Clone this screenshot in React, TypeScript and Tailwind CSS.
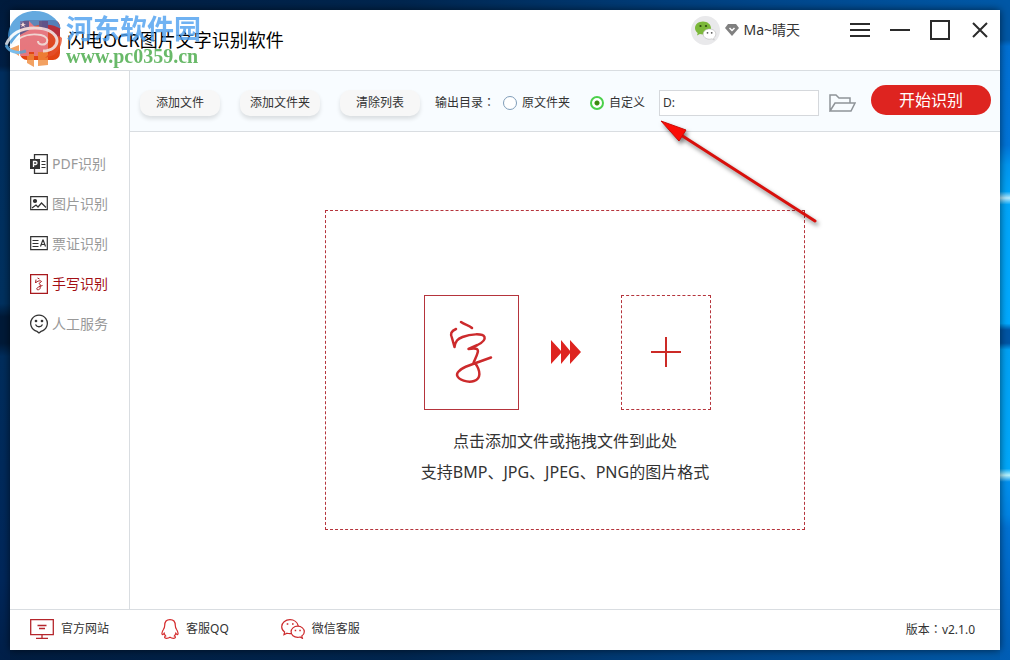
import { useState, type ReactNode } from 'react';

const tasks = [
	{ id: 'pdf', label: 'PDF识别', icon: <PdfIcon /> },
	{ id: 'image', label: '图片识别', icon: <ImageIcon /> },
	{ id: 'ticket', label: '票证识别', icon: <TicketIcon /> },
	{ id: 'handwriting', label: '手写识别', icon: <HandwritingIcon /> },
	{ id: 'manual', label: '人工服务', icon: <SmileIcon /> }
];

export default function App() {
	return (
		<div className="grid min-h-screen grid-cols-[10px_1fr_10px] bg-[linear-gradient(90deg,#001c3f_0%,#00264f_40%,#00468a_75%,#005aaa_100%)] font-['Noto_Sans','Noto_Sans_CJK_SC',sans-serif] text-xs text-[#333]">
			<div className="bg-[linear-gradient(180deg,#001b3c_0%,#001f45_10%,#002e5e_11%,#00315f_46%,#001a38_48%,#001a38_52%,#002d5c_54%,#00275a_88%,#001f48_100%)]" />
			<div className="relative my-[10px] flex flex-col bg-white shadow-[0_0_8px_rgba(0,0,0,0.6)]">
				<TitleBar />
				<div className="flex flex-1">
					<Sidebar />
					<div className="flex min-w-0 flex-1 flex-col">
						<Toolbar />
						<DropZone />
					</div>
				</div>
				<Footer />
				<Watermark />
				<PointerArrow />
			</div>
			<div className="bg-[linear-gradient(180deg,#0057a5_0%,#0057a5_6%,#0070d4_7%,#0074d8_22%,#0096f0_25%,#00a4f8_29%,#b8ecff_30%,#00a6fa_31%,#00aaff_49%,#0055a5_50%,#0055a5_52%,#00a2f5_53%,#00a8fa_71%,#b8f4ff_72%,#0090ee_73%,#0084e4_78%,#0072d4_80%,#0066c4_90%,#005db4_100%)]" />
		</div>
	);
}

function TitleBar() {
	return (
		<header className="flex h-[61px] items-center border-b border-[#d9dde1] pl-[10px]">
			<AppLogo />
			<h1 className="ml-[7px] text-lg leading-6 text-black">
				闪电OCR图片文字识别软件
			</h1>
			<div className="ml-auto flex h-10 items-center self-start">
				<Avatar />
				<GemIcon />
				<span className="mr-10 ml-1 text-sm leading-5">Ma~晴天</span>
				<WindowButton label="菜单">
					<path d="M0 4h20M0 10h20M0 16h20" />
				</WindowButton>
				<WindowButton label="最小化">
					<path d="M0 10h20" />
				</WindowButton>
				<WindowButton label="最大化">
					<path d="M1 1h18v18H1z" />
				</WindowButton>
				<WindowButton label="关闭">
					<path d="M3 3l14 14M17 3L3 17" />
				</WindowButton>
			</div>
		</header>
	);
}

function WindowButton({
	label,
	children
}: {
	label: string;
	children: ReactNode;
}) {
	return (
		<button
			type="button"
			aria-label={label}
			className="flex size-10 items-center justify-center"
		>
			<svg
				className="size-5"
				viewBox="0 0 20 20"
				fill="none"
				stroke="#2b2b2b"
				strokeWidth="2"
			>
				{children}
			</svg>
		</button>
	);
}

function Sidebar() {
	const [active, setActive] = useState('handwriting');

	return (
		<nav className="w-[120px] shrink-0 border-r border-[#d9dde1] pt-[73px]">
			{tasks.map((task) => (
				<button
					key={task.id}
					type="button"
					onClick={() => setActive(task.id)}
					className={
						task.id === active
							? 'flex h-10 w-full items-center gap-1 pl-5 text-sm text-[#a30f14]'
							: 'flex h-10 w-full items-center gap-1 pl-5 text-sm text-[#999]'
					}
				>
					{task.icon}
					{task.label}
				</button>
			))}
		</nav>
	);
}

function Toolbar() {
	const [target, setTarget] = useState('custom');
	const [path, setPath] = useState('D:');

	return (
		<div className="flex h-[61px] items-center border-b border-[#d9dde1] bg-[#f8fcff] pt-[3px] pr-[9px] pl-[10px]">
			<div className="flex gap-5">
				<ToolbarButton>添加文件</ToolbarButton>
				<ToolbarButton>添加文件夹</ToolbarButton>
				<ToolbarButton>清除列表</ToolbarButton>
			</div>
			<span className="ml-[15px] shrink-0">
				输出目录<Colon />
			</span>
			<Radio
				id="target-source"
				label="原文件夹"
				checked={target === 'source'}
				onChange={() => setTarget('source')}
			/>
			<span className="w-3" />
			<Radio
				id="target-custom"
				label="自定义"
				checked={target === 'custom'}
				onChange={() => setTarget('custom')}
			/>
			<input
				type="text"
				aria-label="输出目录"
				value={path}
				onChange={(e) => setPath(e.target.value)}
				className="ml-[14px] h-[26px] w-40 border border-[#d5d8dc] bg-white px-[3px] outline-none"
			/>
			<button type="button" aria-label="打开文件夹" className="ml-[10px]">
				<FolderIcon />
			</button>
			<button
				type="button"
				className="mt-[11px] ml-auto h-[30px] w-[120px] shrink-0 self-start rounded-full bg-[#de2420] text-base leading-5 text-white"
			>
				开始识别
			</button>
		</div>
	);
}

// the TC face centres the full-width colon in its box
function Colon() {
	return <span className="font-['Noto_Sans_CJK_TC',sans-serif]">：</span>;
}

function ToolbarButton({ children }: { children: ReactNode }) {
	return (
		<button
			type="button"
			className="h-[26px] w-20 rounded-[10px] bg-[#f7f7f7] shadow-[0_3px_4px_rgba(0,0,0,0.12)]"
		>
			{children}
		</button>
	);
}

function Radio({
	id,
	label,
	checked,
	onChange
}: {
	id: string;
	label: string;
	checked: boolean;
	onChange: () => void;
}) {
	return (
		<div className="ml-2 flex shrink-0 items-center gap-[5px]">
			<input
				type="radio"
				id={id}
				name="target"
				checked={checked}
				onChange={onChange}
				className="size-[14px] appearance-none rounded-full border border-[#7f9db9] bg-white checked:border-2 checked:border-[#4bd04b] checked:bg-[radial-gradient(circle,#3a8a10_0_2px,#fff_3px)]"
			/>
			<label htmlFor={id}>{label}</label>
		</div>
	);
}

function DropZone() {
	return (
		<main className="flex flex-1 items-center justify-center pb-[2px]">
			<button
				type="button"
				className="flex h-80 w-[480px] flex-col items-center border border-dashed border-[#b5343c] pt-[84px] text-base"
			>
				<span className="mb-4 ml-1 flex items-center">
					<span className="flex h-[115px] w-[95px] items-center justify-center border border-[#b5343c]">
						<HandwrittenMark />
					</span>
					<svg
						className="mr-10 ml-8 h-6 w-[30px]"
						viewBox="0 0 30 24"
						fill="#de2420"
					>
						<path d="M0 0l11 12L0 24zM10 0l10 12-10 12zM19 0l11 12-11 12z" />
					</svg>
					<span className="flex h-[115px] w-[90px] items-center justify-center border border-dashed border-[#b5343c]">
						<svg
							className="size-[30px]"
							viewBox="0 0 30 30"
							stroke="#cc2a26"
							strokeWidth="2"
						>
							<path d="M0 15h30M15 0v30" />
						</svg>
					</span>
				</span>
				<span className="leading-[31px]">点击添加文件或拖拽文件到此处</span>
				<span className="leading-[31px]">
					支持BMP、JPG、JPEG、PNG的图片格式
				</span>
			</button>
		</main>
	);
}

function Footer() {
	return (
		<footer className="flex h-[41px] items-center gap-[52px] border-t border-[#d9dde1] pr-[25px] pb-[2px] pl-5">
			<a href="#site" className="flex items-center gap-[7px]">
				<MonitorIcon />
				官方网站
			</a>
			<a href="#qq" className="flex items-center gap-[7px]">
				<QqIcon />
				客服QQ
			</a>
			<a href="#wechat" className="flex items-center gap-[7px]">
				<WechatIcon />
				微信客服
			</a>
			<span className="ml-auto">
				版本
				<Colon />
				v2.1.0
			</span>
		</footer>
	);
}

function Watermark() {
	return (
		<div className="pointer-events-none absolute top-0 -left-[5px] flex items-start opacity-80">
			<svg className="size-[58px]" viewBox="0 0 58 58" fill="none">
				<path
					d="M3 26C4 10 16 1 30 1c13 0 23 7 26 18-6-4-12-5-18-4-14 0-25 7-32 20z"
					fill="#3e94d8"
				/>
				<path d="M4 39l10-4v11zM22 44h7v13l-7-4zM33 42h10v13l-10 1z" fill="#f08a3c" />
				<path d="M50 26c3 0 5 0 7 2 0 8-4 13-8 17l-9 3c6-5 10-12 10-22z" fill="#e5502a" />
				<path
					d="M15 11h9l6 6h4l4-6h5v31H33v4h-4v-4h-5v4h-9z"
					fill="#e98496"
				/>
				<path d="M15 11h9v9l-9 5zM34 11h9v8l-9-2z" fill="#4b5c9c" />
				<path
					d="M1 35c5-12 16-17 29-17 12 0 22 5 22 13 0 5-5 10-14 10"
					stroke="#f4f8fc"
					strokeWidth="3"
				/>
				<path
					d="M5 37c8-11 20-14 31-12 5 1 7 4 6 7-2 4-9 3-9-1"
					stroke="#f4f8fc"
					strokeWidth="2"
				/>
				<path d="M1 35c3 7 12 9 20 6" stroke="#5aaee8" strokeWidth="3" />
				<path d="M18 12l1 2h2l-2 1 1 2-2-1-2 1 1-2-2-1h2z" fill="#fff" />
			</svg>
			<div className="ml-[3px] font-bold whitespace-nowrap">
				<p className="mt-1 text-[27px] leading-[30px] text-[#4da0f0]">
					河东软件园
				</p>
				<p className="font-['Liberation_Serif',serif] text-xl leading-6 text-[#44a844]">
					www.pc0359.cn
				</p>
			</div>
		</div>
	);
}

function PointerArrow() {
	return (
		<svg
			className="pointer-events-none absolute top-[105px] left-[645px] h-[115px] w-[170px] drop-shadow-[2px_3px_2px_rgba(0,0,0,0.5)]"
			viewBox="0 0 170 115"
		>
			<path d="M26 20L160 106" stroke="#d8100c" strokeWidth="3" strokeLinecap="round" />
			<path d="M6 6l25 9-7 11z" fill="#fb0d06" stroke="#c80d08" />
		</svg>
	);
}

function AppLogo() {
	return (
		<svg className="size-10" viewBox="0 0 40 40" fill="none">
			<defs>
				<linearGradient id="logo-fill" x1="0" y1="0" x2="0" y2="1">
					<stop offset="0" stopColor="#d8503c" />
					<stop offset="1" stopColor="#e2420f" />
				</linearGradient>
			</defs>
			<rect width="40" height="40" rx="7" fill="url(#logo-fill)" />
			<path d="M33 0a7 7 0 017 7v13l-8-8-10-2V0z" fill="#b62f3c" />
		</svg>
	);
}

function Avatar() {
	return (
		<svg className="mr-[5px] size-[29px]" viewBox="0 0 29 29">
			<circle cx="14.5" cy="14.5" r="14.5" fill="#e9e9eb" />
			<path
				d="M12 5.500c-4.500 0-8 2.800-8 6.500 0 2 1 3.800 2.700 5l-.7 2.500 2.900-1.400c1 .3 2 .4 3.100.4 4.400 0 8-2.900 8-6.500s-3.600-6.500-8-6.500z"
				fill="#7cb83a"
			/>
			<path
				d="M18.500 13c-3.600 0-6.300 2.200-6.300 5s2.700 5.200 6.300 5.200c.9 0 1.700-.2 2.400-.4l2.300 1.200-.6-2c1.400-1 2.200-2.400 2.200-4 0-2.800-2.800-5-6.300-5z"
				fill="#fff"
				stroke="#bbb"
				strokeWidth=".6"
			/>
			<circle cx="9.500" cy="10" r="1.100" fill="#2d4a10" />
			<circle cx="15" cy="10" r="1.100" fill="#2d4a10" />
			<circle cx="16.500" cy="16.800" r=".9" fill="#555" />
			<circle cx="20.700" cy="16.800" r=".9" fill="#555" />
		</svg>
	);
}

function GemIcon() {
	return (
		<svg className="h-3 w-[14px]" viewBox="0 0 14 12" fill="none">
			<path d="M3 0h8l3 4-7 8-7-8z" fill="#808080" />
			<path d="M4.500 4L7 6.500 9.500 4" stroke="#fff" strokeWidth="1.500" />
		</svg>
	);
}

function FolderIcon() {
	return (
		<svg
			className="h-5 w-[27px]"
			viewBox="0 0 27 20"
			fill="none"
			stroke="#8f9499"
			strokeWidth="1.500"
		>
			<path d="M1 18V2h6l3 3h11v5M1 18L6 10h20l-4 8z" />
		</svg>
	);
}

function PdfIcon() {
	return (
		<svg className="size-5 w-[18px] shrink-0" viewBox="0 0 18 20" fill="none">
			<path d="M4.500 5V.7h12.800v18.600H4.500V15" stroke="#333" strokeWidth="1.300" />
			<path d="M0 5h10v10H0z" fill="#333" />
			<path d="M3.500 13V7.500h2a1.500 1.500 0 010 3h-2" stroke="#fff" strokeWidth="1.300" />
			<path d="M11.500 7.500h4M11.500 10.500h4M11.500 13.500h4" stroke="#333" strokeWidth="1.200" />
		</svg>
	);
}

function ImageIcon() {
	return (
		<svg
			className="size-[18px] shrink-0"
			viewBox="0 0 18 18"
			fill="none"
			stroke="#333"
			strokeWidth="1.200"
		>
			<path d="M.7 1.700h16.600v13H.7z" />
			<circle cx="5" cy="6" r="1.500" fill="#333" />
			<path d="M2 13l4-3 2 2 3.500-4 4.500 4.500" />
		</svg>
	);
}

function TicketIcon() {
	return (
		<svg
			className="size-[18px] shrink-0"
			viewBox="0 0 18 18"
			fill="none"
			stroke="#333"
			strokeWidth="1.200"
		>
			<path d="M.7 1.700h16.600v13H.7zM2.500 5.500h6M2.500 8.500h6M2.500 11.500h6" />
			<path d="M10.500 11.500L12.800 5h.4l2.300 6.500M11.500 9.500h3" />
		</svg>
	);
}

function HandwritingIcon() {
	return (
		<svg
			className="h-5 w-[18px] shrink-0"
			viewBox="0 0 18 20"
			fill="none"
			stroke="#a8191d"
		>
			<path d="M.6.600h16.800v18.800H.6z" strokeWidth="1.300" />
			<path d="M7.500 4l2 1M6 5.500L5.500 9C7 7 11 6 11.500 7.500L9 9.500l1.500 1.500-1 2M10 12.500c1 2-1 4-3 3-1-1.500 1-2.500 5.500-4" />
		</svg>
	);
}

function SmileIcon() {
	return (
		<svg
			className="h-5 w-[18px] shrink-0"
			viewBox="0 0 18 20"
			fill="none"
			stroke="#333"
			strokeWidth="1.300"
		>
			<path d="M9 19l-2-1.600A8.300 8.300 0 1111 17.400z" />
			<path d="M5.500 10.500c1.500 3 5.500 3 7 0" />
			<circle cx="6" cy="7" r=".7" fill="#333" />
			<circle cx="12" cy="7" r=".7" fill="#333" />
		</svg>
	);
}

function HandwrittenMark() {
	return (
		<svg
			className="h-[66px] w-[46px]"
			viewBox="25 25 46 66"
			fill="none"
			stroke="#cc2a2c"
			strokeWidth="2.500"
			strokeLinecap="round"
			strokeLinejoin="round"
		>
			<path d="M38 28c4 3 8 3 11 6M33 35c-5 2-6 5-4 9l2.500 9c1-6 3-8 8-10 8-3 20-4 22 0 1 3-3 6-7 8l-9 4c6-1 11-1 9 4-1 4-3 7-4 10" />
			<path d="M68 63.500L50 70c-9 3-16 7-16 11 1 5 11 8 17 6 7-2 7-10 1-18" />
		</svg>
	);
}

function MonitorIcon() {
	return (
		<svg
			className="h-5 w-6"
			viewBox="0 0 24 20"
			fill="none"
			stroke="#b5262c"
			strokeWidth="1.300"
		>
			<path d="M.7.700h22.600v15H.7zM12 16v3M6 19.300h12M7.500 6.500h9M9 9.500h6" />
		</svg>
	);
}

function QqIcon() {
	return (
		<svg
			className="h-5 w-[18px]"
			viewBox="0 0 18 20"
			fill="none"
			stroke="#d42a2c"
			strokeWidth="1.200"
		>
			<path d="M9 .7C5.500.700 3.700 3.300 3.700 6.500c0 1.800-.5 2.700-1.300 4C1.300 12.200.7 14.500 1.200 15.500c.4.600 1.200-.2 1.900-1.300.3 1.300.8 2 1.500 2.800-1.500.6-1.400 2.300.8 2.300 1.500 0 2.800-.4 3.600-1 .8.600 2.100 1 3.600 1 2.200 0 2.300-1.700.8-2.300.7-.8 1.200-1.500 1.500-2.800.7 1.100 1.500 1.900 1.900 1.300.5-1-.1-3.300-1.200-5-.8-1.300-1.300-2.200-1.300-4C14.300 3.300 12.500.7 9 .7z" />
		</svg>
	);
}

function WechatIcon() {
	return (
		<svg
			className="h-5 w-6"
			viewBox="0 0 24 20"
			fill="none"
			stroke="#cc2a2c"
			strokeWidth="1.200"
		>
			<path d="M17.300 7C16.500 3.300 13 .7 9 .7 4.400.7.700 3.900.7 7.700c0 2.200 1.100 4 2.900 5.300L3 15.700l3-1.500c1.200.4 2.500.5 4 .4" />
			<path d="M16.700 7.200c-3.800 0-6.600 2.500-6.600 5.600s2.800 5.600 6.600 5.600c.8 0 1.600-.1 2.300-.4l2.400 1.300-.6-2.200c1.600-1 2.500-2.600 2.500-4.300 0-3.100-2.800-5.600-6.600-5.600z" />
			<path d="M5.700 5h1.600M11 5h1.600M13.700 11.500h1.500M18.300 11.500h1.500" strokeWidth="1.600" />
		</svg>
	);
}
